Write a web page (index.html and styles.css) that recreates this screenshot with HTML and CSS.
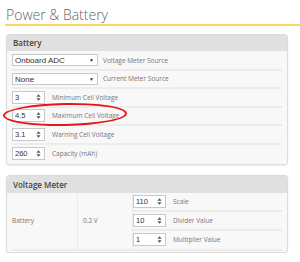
FILE: index.html
```html
<!DOCTYPE html>
<html lang="en">
<head>
    <meta charset="UTF-8">
    <title>Power &amp; Battery</title>
    <link rel="stylesheet" href="styles.css">
</head>
<body>
    <div class="tab">
        <h1 class="tab-title">Power &amp; Battery</h1>

        <div class="gui-box battery">
            <div class="gui-head">Battery</div>
            <div class="gui-body">
                <div class="row">
                    <div class="select wide">Onboard ADC<span class="caret">&#9660;</span></div>
                    <span class="label">Voltage Meter Source</span>
                </div>
                <div class="row">
                    <div class="select wide">None<span class="caret">&#9660;</span></div>
                    <span class="label">Current Meter Source</span>
                </div>
                <div class="row">
                    <div class="num">3<svg class="spin" viewBox="0 0 6 10"><path d="M3 1 L5.5 4 H0.5 Z M3 9 L5.5 6 H0.5 Z"/></svg></div>
                    <span class="label">Minimum Cell Voltage</span>
                </div>
                <div class="row">
                    <div class="num">4.5<svg class="spin" viewBox="0 0 6 10"><path d="M3 1 L5.5 4 H0.5 Z M3 9 L5.5 6 H0.5 Z"/></svg></div>
                    <span class="label">Maximum Cell Voltage</span>
                </div>
                <div class="row">
                    <div class="num">3.1<svg class="spin" viewBox="0 0 6 10"><path d="M3 1 L5.5 4 H0.5 Z M3 9 L5.5 6 H0.5 Z"/></svg></div>
                    <span class="label">Warning Cell Voltage</span>
                </div>
                <div class="row last">
                    <div class="num">260<svg class="spin" viewBox="0 0 6 10"><path d="M3 1 L5.5 4 H0.5 Z M3 9 L5.5 6 H0.5 Z"/></svg></div>
                    <span class="label">Capacity (mAh)</span>
                </div>
            </div>
            <div class="mark"></div>
        </div>

        <div class="gui-box meter">
            <div class="gui-head">Voltage Meter</div>
            <div class="meter-grid">
                <div class="cell name">Battery</div>
                <div class="cell value">0.2 V</div>
                <div class="cell settings">
                    <div class="row">
                        <div class="num">110<svg class="spin" viewBox="0 0 6 10"><path d="M3 1 L5.5 4 H0.5 Z M3 9 L5.5 6 H0.5 Z"/></svg></div>
                        <span class="label">Scale</span>
                    </div>
                    <div class="row">
                        <div class="num">10<svg class="spin" viewBox="0 0 6 10"><path d="M3 1 L5.5 4 H0.5 Z M3 9 L5.5 6 H0.5 Z"/></svg></div>
                        <span class="label">Divider Value</span>
                    </div>
                    <div class="row">
                        <div class="num">1<svg class="spin" viewBox="0 0 6 10"><path d="M3 1 L5.5 4 H0.5 Z M3 9 L5.5 6 H0.5 Z"/></svg></div>
                        <span class="label">Multiplier Value</span>
                    </div>
                </div>
            </div>
        </div>
    </div>
</body>
</html>
```

FILE: styles.css
```css
* {
    margin: 0;
    padding: 0;
    box-sizing: border-box;
}

body {
    background: #fff;
    font-family: "Open Sans", sans-serif;
    color: #666;
}

.tab {
    padding: 5px 0 0 5px;
}

.tab-title {
    font-size: 14px;
    font-weight: 300;
    color: #666;
    line-height: 19px;
    padding-left: 1px;
    border-bottom: 2px solid #ffd65c;
}

.gui-box {
    position: relative;
    margin: 8px 12px 0 1px;
    border: 1px solid #dcdcdc;
    border-radius: 3px;
    background: #f8f8f8;
    box-shadow: 0 1px 2px rgba(0, 0, 0, 0.08);
}

.gui-head {
    background: #e0e0e0;
    height: 16px;
    line-height: 16px;
    padding-left: 6px;
    font-size: 8px;
    font-weight: 600;
    color: #444;
    border-radius: 2px 2px 0 0;
}

.gui-body {
    padding: 1px 5px 2px 5px;
}

.row {
    display: flex;
    align-items: center;
    height: 18.5px;
    border-bottom: 2px solid #ececec;
}

.row.last {
    height: 17px;
    border-bottom: none;
}

.label {
    font-size: 6.5px;
    color: #777;
    margin-left: 5px;
}

.select {
    position: relative;
    height: 12px;
    line-height: 11px;
    background: #fff;
    border: 1px solid #c8c8c8;
    padding-left: 2px;
    font-family: "Liberation Sans", Arial, sans-serif;
    font-size: 8px;
    color: #333;
}

.select.wide {
    width: 86px;
}

.caret {
    position: absolute;
    right: 3px;
    top: 0;
    font-size: 5px;
    color: #333;
}

.num {
    display: flex;
    align-items: center;
    justify-content: space-between;
    width: 33px;
    height: 13px;
    background: #fff;
    border: 1px solid #c8c8c8;
    padding: 0 3px 0 2px;
    font-family: "Liberation Sans", Arial, sans-serif;
    font-size: 7.5px;
    color: #333;
}

.num + .label {
    margin-left: 7px;
}

.spin {
    width: 5px;
    height: 9px;
    fill: #555;
}

.mark {
    position: absolute;
    left: -4px;
    top: 68px;
    width: 124px;
    height: 23px;
    border: 2px solid #e5161b;
    border-radius: 50%;
    transform: rotate(-1deg);
}

.meter {
    margin-top: 10px;
}

.meter .gui-head {
    height: 17px;
    line-height: 17px;
}

.meter-grid {
    display: grid;
    grid-template-columns: 66px 55px 1fr;
    padding: 0 5px 1px 5px;
}

.cell {
    border-bottom: 2px solid #ececec;
    font-size: 6.5px;
    color: #777;
}

.cell.name,
.cell.value {
    display: flex;
    align-items: center;
    border-right: 1px solid #ececec;
}

.cell.value {
    padding-left: 5px;
}

.settings .row {
    height: 19px;
}

.settings .row:last-child {
    height: 18px;
    border-bottom: none;
}
```
